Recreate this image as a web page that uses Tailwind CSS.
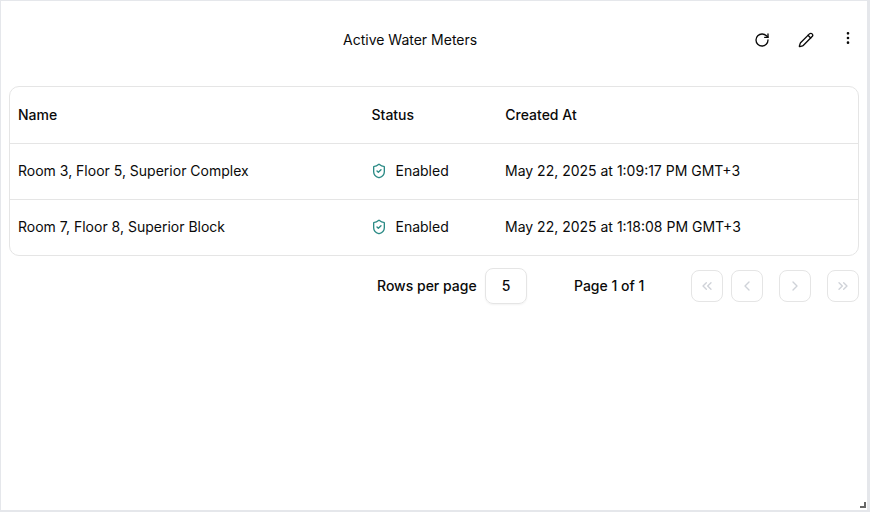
<!DOCTYPE html>
<html>
<head>
<meta charset="utf-8">
<script src="https://cdn.jsdelivr.net/npm/@tailwindcss/browser@4"></script>
</head>
<body class="w-[870px] h-[512px] overflow-hidden bg-[#e5e7eb] font-['Inter',sans-serif] text-sm text-[#0a0a0a]">
<div class="relative ml-px mt-px w-[866px] h-[509px] bg-white px-2 flex flex-col">
  <header class="relative h-[85px] shrink-0 flex items-center">
    <h1 class="absolute left-[334px] top-[29px] font-normal text-sm text-[#0a0a0a]">Active Water Meters</h1>
    <div class="absolute right-[1px] top-[25px] flex items-start">
      <svg class="w-4 h-4 mt-[6px] mr-[28px]" viewBox="0 0 24 24" fill="none" stroke="#0a0a0a" stroke-width="2" stroke-linecap="round" stroke-linejoin="round"><path d="M21 12a9 9 0 1 1-9-9c2.52 0 4.93 1 6.74 2.74L21 8"/><path d="M21 3v5h-5"/></svg>
      <svg class="w-4 h-4 mt-[6px] mr-[26px]" viewBox="0 0 24 24" fill="none" stroke="#0a0a0a" stroke-width="2" stroke-linecap="round" stroke-linejoin="round"><path d="M21.174 6.812a1 1 0 0 0-3.986-3.987L3.842 16.174a2 2 0 0 0-.5.83l-1.321 4.352a.5.5 0 0 0 .623.622l4.353-1.32a2 2 0 0 0 .83-.497z"/><path d="m15 5 4 4"/></svg>
      <svg class="w-4 h-4 mt-[4px] mr-[2px]" viewBox="0 0 24 24" fill="none" stroke="#0a0a0a" stroke-width="2" stroke-linecap="round" stroke-linejoin="round"><circle cx="12" cy="12" r="1"/><circle cx="12" cy="5" r="1"/><circle cx="12" cy="19" r="1"/></svg>
    </div>
  </header>
  <div class="border border-[#e5e5e5] rounded-[10px] h-[170px] w-[850px]">
    <div class="grid grid-cols-[353.5px_133.5px_1fr] h-[57px] items-center border-b border-[#e5e5e5] px-2 font-medium">
      <span>Name</span><span>Status</span><span class="ml-[0.3px]">Created At</span>
    </div>
    <div class="grid grid-cols-[353.5px_133.5px_1fr] h-[56px] items-center border-b border-[#e5e5e5] px-2 pb-[2px]">
      <span>Room 3, Floor 5, Superior Complex</span>
      <span class="flex items-center gap-2"><svg class="w-4 h-4 -ml-[0.75px] mr-[0.75px]" viewBox="0 0 24 24" fill="none" stroke="#2a8a85" stroke-width="2" stroke-linecap="round" stroke-linejoin="round"><path d="M20 13c0 5-3.5 7.5-7.66 8.95a1 1 0 0 1-.67-.01C7.5 20.5 4 18 4 13V6a1 1 0 0 1 1-1c2 0 4.5-1.2 6.24-2.72a1.17 1.17 0 0 1 1.52 0C14.51 3.81 17 5 19 5a1 1 0 0 1 1 1z"/><path d="m9 12 2 2 4-4"/></svg>Enabled</span>
      <span>May 22, 2025 at 1:09:17 PM GMT+3</span>
    </div>
    <div class="grid grid-cols-[353.5px_133.5px_1fr] h-[55px] items-center px-2 pb-[2px]">
      <span>Room 7, Floor 8, Superior Block</span>
      <span class="flex items-center gap-2"><svg class="w-4 h-4 -ml-[0.75px] mr-[0.75px]" viewBox="0 0 24 24" fill="none" stroke="#2a8a85" stroke-width="2" stroke-linecap="round" stroke-linejoin="round"><path d="M20 13c0 5-3.5 7.5-7.66 8.95a1 1 0 0 1-.67-.01C7.5 20.5 4 18 4 13V6a1 1 0 0 1 1-1c2 0 4.5-1.2 6.24-2.72a1.17 1.17 0 0 1 1.52 0C14.51 3.81 17 5 19 5a1 1 0 0 1 1 1z"/><path d="m9 12 2 2 4-4"/></svg>Enabled</span>
      <span>May 22, 2025 at 1:18:08 PM GMT+3</span>
    </div>
  </div>
  <div class="mt-3 h-9 flex items-center font-medium ml-[368px]">
    <span class="w-[108px]">Rows per page</span>
    <div class="w-[42px] h-9 flex items-center justify-center border border-[#e5e5e5] rounded-lg shadow-xs font-medium">5</div>
    <span class="ml-[47px] w-[117px]">Page 1 of 1</span>
    <div class="w-8 h-8 flex items-center justify-center border border-[#e5e5e5] rounded-lg"><svg class="w-4 h-4" viewBox="0 0 24 24" fill="none" stroke="#cfd2d8" stroke-width="2" stroke-linecap="round" stroke-linejoin="round"><path d="m11 17-5-5 5-5"/><path d="m18 17-5-5 5-5"/></svg></div>
    <div class="ml-2 w-8 h-8 flex items-center justify-center border border-[#e5e5e5] rounded-lg"><svg class="w-4 h-4" viewBox="0 0 24 24" fill="none" stroke="#cfd2d8" stroke-width="2" stroke-linecap="round" stroke-linejoin="round"><path d="m15 18-6-6 6-6"/></svg></div>
    <div class="ml-4 w-8 h-8 flex items-center justify-center border border-[#e5e5e5] rounded-lg"><svg class="w-4 h-4" viewBox="0 0 24 24" fill="none" stroke="#cfd2d8" stroke-width="2" stroke-linecap="round" stroke-linejoin="round"><path d="m9 18 6-6-6-6"/></svg></div>
    <div class="ml-4 w-8 h-8 flex items-center justify-center border border-[#e5e5e5] rounded-lg"><svg class="w-4 h-4" viewBox="0 0 24 24" fill="none" stroke="#cfd2d8" stroke-width="2" stroke-linecap="round" stroke-linejoin="round"><path d="m6 17 5-5-5-5"/><path d="m13 17 5-5-5-5"/></svg></div>
  </div>
  <svg class="absolute right-[1px] bottom-[2px] w-[6px] h-[6px]" viewBox="0 0 6 6"><path d="M4 0h2v6H0V4h4z" fill="#666"/></svg>
</div>
</body>
</html>
